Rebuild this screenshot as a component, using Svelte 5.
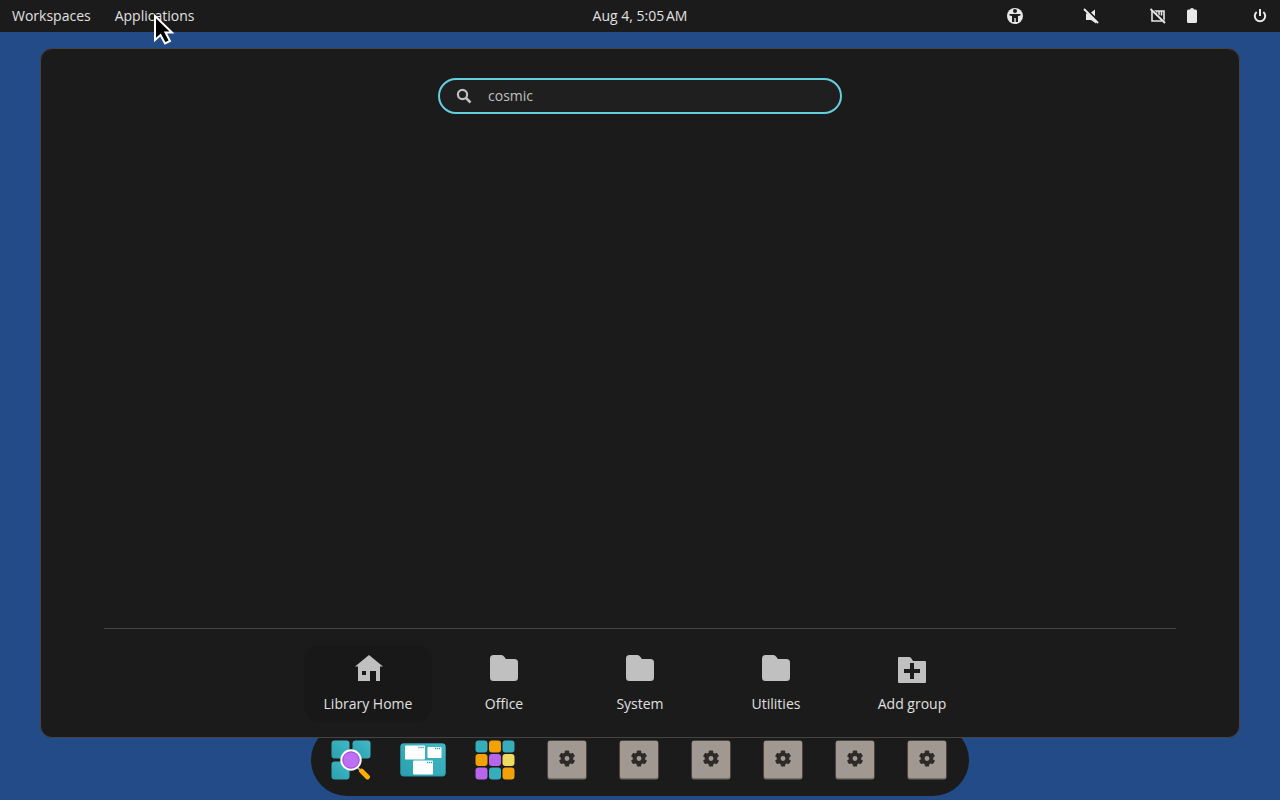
<script>
  const groups = [
    { label: 'Library Home', icon: 'home', active: true },
    { label: 'Office', icon: 'folder' },
    { label: 'System', icon: 'folder' },
    { label: 'Utilities', icon: 'folder' },
    { label: 'Add group', icon: 'add' }
  ];
  const tileColors = ['teal', 'orange', 'teal', 'orange', 'purple', 'yellow', 'purple', 'teal', 'orange'];
  const genericApps = [1, 2, 3, 4, 5, 6];
  let query = $state('cosmic');
</script>

<div class="desktop">
  <header class="panel">
    <nav class="left">
      <button>Workspaces</button>
      <button>Applications</button>
    </nav>
    <button class="clock">Aug 4, 5:05&#8239;AM</button>
    <div class="status">
      <button class="a11y" aria-label="Accessibility">
        <svg width="16" height="16" viewBox="0 0 16 16">
          <circle cx="8" cy="8" r="8" fill="#e8e8e8" />
          <circle cx="8" cy="3" r="2" fill="#1b1b1b" />
          <path d="M2.500 6h11v1.500L11 8v6H8.700v-4H7.300v4H5V8l-2.500-.5z" fill="#1b1b1b" />
        </svg>
      </button>
      <button class="audio" aria-label="Sound muted">
        <svg width="16" height="16" viewBox="0 0 16 16">
          <path d="M3 5.500h2L13 13v2.500L8 12H3zM8 4.500L12 1.500v6.800z" fill="#e8e8e8" />
          <path d="M1 1l14 14" stroke="#e8e8e8" stroke-width="2" />
        </svg>
      </button>
      <button class="network" aria-label="Network disconnected">
        <svg width="16" height="16" viewBox="0 0 16 16">
          <path d="M4 3h10v10M2 3v10h10M6.500 3v3M9 3v4.500M11.500 3v4.500" fill="none" stroke="#e8e8e8" stroke-width="1.600" />
          <path d="M1.500 0l14 14" stroke="#1b1b1b" stroke-width="1" />
          <path d="M.5 1l14.500 14" stroke="#e8e8e8" stroke-width="1.800" />
        </svg>
      </button>
      <button class="battery" aria-label="Battery">
        <svg width="16" height="16" viewBox="0 0 16 16">
          <path d="M6 1.500Q6 0 8 0t2 1.500h1.500Q13 1.500 13 3v10.500q0 1.500-1.500 1.500h-7Q3 15 3 13.500V3q0-1.500 1.500-1.500z" fill="#e8e8e8" />
        </svg>
      </button>
      <button aria-label="Power">
        <svg width="16" height="16" viewBox="0 0 16 16">
          <path d="M4.700 4a5.200 5.200 0 1 0 6.600 0" fill="none" stroke="#e8e8e8" stroke-width="2" />
          <path d="M8 1v7" stroke="#e8e8e8" stroke-width="2" />
        </svg>
      </button>
    </div>
    <svg class="cursor" width="24" height="32" viewBox="0 0 24 32" aria-hidden="true">
      <path d="M2 2v24l5.500-5 4.500 8.500 5-2.500-4.500-8.500H19z" fill="#000" stroke="#fff" stroke-width="2" />
    </svg>
  </header>

  <main class="library">
    <label class="search">
      <svg width="16" height="16" viewBox="0 0 16 16" aria-hidden="true">
        <circle cx="6.500" cy="6.500" r="4.600" fill="none" stroke="#c0c0c0" stroke-width="2.200" />
        <path d="M10 10l4.500 4.500" stroke="#c0c0c0" stroke-width="2.500" />
      </svg>
      <input type="text" aria-label="Search applications" bind:value={query} />
    </label>
    <div class="results"></div>
    <hr />
    <nav class="groups">
      {#each groups as group}
        <button class:active={group.active}>
          <svg width="32" height="32" viewBox="0 0 32 32" fill="#c0c0c0" aria-hidden="true">
            {#if group.icon === 'home'}
              <path fill-rule="evenodd" d="M17 3L3 14.500h3V29h12V19h6v10h4V14.500h3zM10 19h4v4h-4z" />
            {:else if group.icon === 'folder'}
              <path d="M5.500 3h8q1.500 0 2.500 1.500L18 7h8.500Q30 7 30 10.500v15q0 3.500-3.500 3.500h-21Q2 29 2 25.500v-19Q2 3 5.500 3z" />
            {:else}
              <path fill-rule="evenodd" d="M3 5h10.500q1 0 2 1.500L17 9h12q1 0 1 1v20q0 1-1 1H3q-1 0-1-1V6q0-1 1-1zM14 11v6H8v4h6v6h4v-6h6v-4h-6v-6z" />
            {/if}
          </svg>
          <span>{group.label}</span>
        </button>
      {/each}
    </nav>
  </main>

  <footer class="dock">
    <button aria-label="Launcher">
      <svg width="40" height="40" viewBox="0 0 40 40">
        <defs>
          <linearGradient id="teal" x1="0" y1="1" x2="1" y2="0">
            <stop offset="0" stop-color="#2aa0b0" />
            <stop offset="1" stop-color="#43b9c6" />
          </linearGradient>
        </defs>
        <rect x=".5" y=".5" width="18" height="18" rx="3" fill="url(#teal)" />
        <rect x="21.500" y=".5" width="18" height="18" rx="3" fill="url(#teal)" />
        <rect x=".5" y="21.500" width="18" height="18" rx="3" fill="url(#teal)" />
        <path d="M26 27l4 4" stroke="#999" stroke-width="2" />
        <path d="M30.500 31l6 6" stroke="#ffad00" stroke-width="4.800" stroke-linecap="round" />
        <circle cx="20" cy="20" r="9.700" fill="#bd70f2" stroke="#fff" stroke-width="2" />
        <circle cx="20" cy="20" r="8" fill="none" stroke="#a855dd" stroke-width="1" />
      </svg>
    </button>
    <button aria-label="Workspaces">
      <svg class="wide" width="46" height="40" viewBox="0 0 46 40">
        <rect x=".5" y="3.500" width="45" height="33" rx="3" fill="#2a98a7" />
        <rect x=".5" y="3.500" width="45" height="32" rx="3" fill="url(#teal)" />
        <g fill="#fff">
          <rect x="5" y="5.500" width="20" height="14" rx="1" />
          <rect x="27.500" y="7" width="14" height="11" rx="1" />
          <rect x="13" y="20.500" width="20" height="14" rx="1" />
        </g>
        <path d="M18.500 7.500h6M35 8.500h6M27 22.500h6" stroke="#2f9fae" stroke-width="1.500" stroke-dasharray="1.200 .8" />
      </svg>
    </button>
    <button aria-label="App library">
      <svg width="40" height="40" viewBox="0 0 40 40">
        {#each tileColors as color, i}
          <rect class={color} x={(i % 3) * 13.5 + 0.5} y={Math.floor(i / 3) * 13.5 + 0.5} width="12" height="12" rx="3" />
        {/each}
      </svg>
    </button>
    {#each genericApps as app}
      <button aria-label="Application {app}">
        <svg width="40" height="40" viewBox="0 0 40 40">
          <rect x=".5" y=".5" width="39" height="39" rx="2.500" fill="#777069" />
          <rect x="1" y="1" width="38" height="37" rx="2" fill="#a09891" />
          <g transform="translate(20 18.500)">
            <g fill="#2d2b2a">
              {#each [0, 60, 120] as angle}
                <rect x="-2.200" y="-8" width="4.400" height="16" rx="1" transform="rotate({angle})" />
              {/each}
              <circle r="6.200" />
            </g>
            <circle r="2.400" fill="#a09891" />
          </g>
        </svg>
      </button>
    {/each}
  </footer>
</div>

<style>
  :global(body) {
    margin: 0;
    background: #224b87;
  }
  .desktop {
    box-sizing: border-box;
    min-height: 100vh;
    display: flex;
    flex-direction: column;
    padding-bottom: 4px;
    font: 14px/20px 'Open Sans', sans-serif;
    color: #e0e0e0;
  }
  button {
    border: 0;
    padding: 0;
    background: none;
    color: inherit;
    font: inherit;
  }
  svg {
    display: block;
  }
  .panel {
    position: relative;
    display: grid;
    grid-template-columns: 1fr auto 1fr;
    align-items: center;
    height: 32px;
    padding: 0 12px;
    background: #1b1b1b;
  }
  .left {
    display: flex;
    gap: 24px;
  }
  .status {
    display: flex;
    justify-content: flex-end;
  }
  .a11y {
    margin-right: 60px;
  }
  .audio {
    margin-right: 51px;
  }
  .battery {
    margin-right: 52px;
  }
  .network {
    margin-right: 18px;
  }
  .cursor {
    position: absolute;
    left: 153px;
    top: 14px;
    z-index: 3;
  }
  .library {
    position: relative;
    z-index: 1;
    flex: 1;
    display: flex;
    flex-direction: column;
    margin: 16px 40px 0;
    padding: 29px 63px 15px;
    background: #1b1b1b;
    border: 1px solid #444;
    border-radius: 12px;
  }
  .search {
    box-sizing: border-box;
    align-self: center;
    display: flex;
    align-items: center;
    gap: 16px;
    width: 404px;
    max-width: 100%;
    height: 36px;
    padding: 0 16px;
    border: 2px solid #63d0df;
    border-radius: 18px;
    background: #1f1f1f;
  }
  .search input {
    flex: 1;
    min-width: 0;
    border: 0;
    padding: 0;
    outline: none;
    background: none;
    color: #c0c0c0;
    font: inherit;
  }
  .results {
    flex: 1;
  }
  hr {
    width: 100%;
    height: 1px;
    margin: 0 0 16px;
    border: 0;
    background: #444;
  }
  .groups {
    display: flex;
    justify-content: center;
    gap: 8px;
  }
  .groups button {
    display: flex;
    flex-direction: column;
    align-items: center;
    gap: 10px;
    width: 128px;
    padding: 7px 0 8px;
    border-radius: 16px;
  }
  .groups .active {
    background: #181818;
  }
  .dock {
    align-self: center;
    display: flex;
    gap: 32px;
    margin-top: -14px;
    padding: 16px 22px 16px 20px;
    border-radius: 36px;
    background: #1b1b1b;
  }
  .dock button {
    width: 40px;
    height: 40px;
  }
  .wide {
    margin: 0 -3px;
  }
  .teal {
    fill: #36adbb;
  }
  .orange {
    fill: #f2a108;
  }
  .purple {
    fill: #b765ea;
  }
  .yellow {
    fill: #f0db61;
  }
</style>
